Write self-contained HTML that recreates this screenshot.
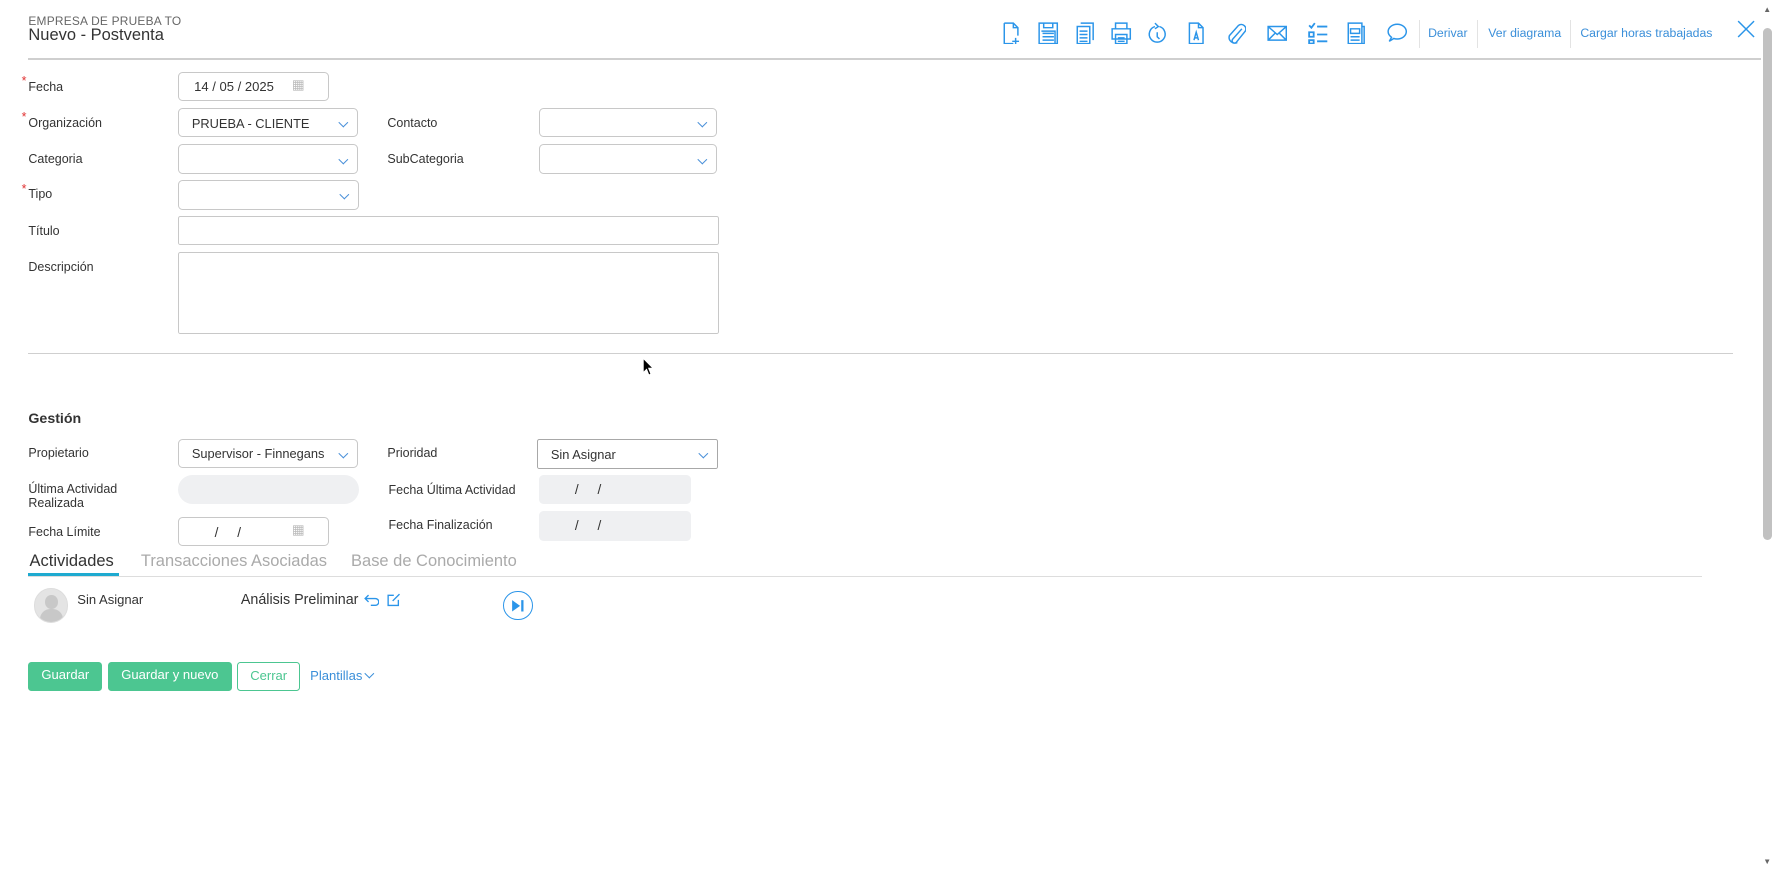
<!DOCTYPE html>
<html><head><meta charset="utf-8"><style>
html,body{margin:0;padding:0;background:#fff;overflow:hidden}
body{width:1565px;height:766px;zoom:1.13610;position:relative;font-family:"Liberation Sans",sans-serif;color:#333}
.a{position:absolute}
.lbl{position:absolute;font-size:11px;color:#333;left:25px}
.req:before{content:"*";color:#e03030;position:absolute;left:-6px;top:-5px;font-size:11px}
.box{position:absolute;border:1px solid #c8c8c8;border-radius:4px;box-sizing:border-box;background:#fff;font-size:13px}
.sel:after{content:"";position:absolute;right:9px;top:9px;width:5px;height:5px;border-right:1.3px solid #4a90d9;border-bottom:1.3px solid #4a90d9;transform:rotate(45deg)}
.gray{position:absolute;background:#eff0f2;border-radius:4px}
.ic{position:absolute;top:19px}
.ic svg{width:18px;height:20px;fill:none;stroke:#2b95e9;stroke-width:1.3}
.lnk{position:absolute;top:23px;font-size:10.8px;color:#3b8fd9}
.sep{position:absolute;top:18px;width:1px;height:24px;background:#e3e3e3}
.btn{position:absolute;top:583px;height:25px;box-sizing:border-box;border-radius:3px;font-size:11.5px;line-height:23px;text-align:center}
</style></head><body>
<div class="a" style="left:25px;top:12px;font-size:10.5px;color:#666;letter-spacing:.2px">EMPRESA DE PRUEBA TO</div>
<div class="a" style="left:25px;top:23px;font-size:14.5px;color:#333">Nuevo - Postventa</div>
<div class="a" style="left:25px;top:51px;width:1525px;height:2px;background:#cfcfcf"></div>

<div class="ic" style="left:882px"><svg viewBox="0 0 18 20"><path d="M2 1h8l4 4v7M2 1v18h8M10 1v4h4M12 14v6M9 17h6"/></svg></div>
<div class="ic" style="left:914px"><svg viewBox="0 0 18 20"><path d="M1 1h16v18H1zM5 1v4h8V1M4 10h10M4 13h10M4 16h10M3 8h12v11"/></svg></div>
<div class="ic" style="left:946px"><svg viewBox="0 0 18 20"><path d="M5 1h11v15M2 4h11v15H2zM4 8h7M4 11h7M4 14h7M4 17h7"/></svg></div>
<div class="ic" style="left:978px"><svg viewBox="0 0 18 20"><path d="M4 6V1h10v5M1 6h16v9H1zM4 11h10v8H4zM6 14h6M6 17h6"/></svg></div>
<div class="ic" style="left:1010px"><svg viewBox="0 0 18 20"><path d="M7 4a7 7 0 1 0 4 0M7 1l3 3-3 2M9 9v4l2 2"/></svg></div>
<div class="ic" style="left:1044px"><svg viewBox="0 0 18 20"><path d="M3 1h8l4 4v14H3zM11 1v4h4M7 16l2-7 2 7M8 14h2"/></svg></div>
<div class="ic" style="left:1079px"><svg viewBox="0 0 18 20"><path d="M14 6l-8 9a2 2 0 0 0 3 3l8-10a4 4 0 0 0-6-5L3 12a5 5 0 0 0 7 6"/></svg></div>
<div class="ic" style="left:1115px"><svg viewBox="0 0 18 20"><path d="M1 4h16v12H1zM1 4l8 7 8-7M1 16l6-6M17 16l-6-6"/></svg></div>
<div class="ic" style="left:1151px"><svg viewBox="0 0 18 20" style="stroke-width:1.6"><path d="M1 3l2 2 3-4M1 9h4v4H1zM1 16h4v3H1zM8 4h9M8 11h9M8 17h9"/></svg></div>
<div class="ic" style="left:1185px"><svg viewBox="0 0 18 20"><path d="M2 1h12v18H2zM14 4h2v15h-2M4 6h8v4H4zM4 13h8M4 16h8"/></svg></div>
<div class="ic" style="left:1221px"><svg viewBox="0 0 18 20"><path d="M9 2c4.5 0 8 3 8 6.5S13.5 15 9 15c-1 0-2 0-3-.5L2 17l2-3.5C2 12 1 10.5 1 8.5 1 5 4.5 2 9 2z"/></svg></div>
<div class="sep" style="left:1249px"></div>
<div class="lnk" style="left:1257px">Derivar</div>
<div class="sep" style="left:1300px"></div>
<div class="lnk" style="left:1310px">Ver diagrama</div>
<div class="sep" style="left:1382px"></div>
<div class="lnk" style="left:1391px">Cargar horas trabajadas</div>
<div class="a" style="left:1529px;top:18px"><svg width="16" height="16" viewBox="0 0 16 16"><path d="M1 1l14 14M15 1L1 15" stroke="#2b95e9" stroke-width="1.3"/></svg></div>

<div class="a" style="left:1550px;top:0;width:15px;height:766px;background:#fff"></div>
<div class="a" style="left:1552px;top:25px;width:8px;height:450px;background:#c1c1c1;border-radius:4px"></div>
<div class="a" style="left:1552px;top:4px;font-size:7px;color:#666">▲</div>
<div class="a" style="left:1552px;top:754px;font-size:7px;color:#666">▼</div>

<div class="lbl req" style="top:70px">Fecha</div>
<div class="box" style="left:157px;top:63px;width:133px;height:26px"><span class="a" style="left:13px;top:6px;font-size:11.5px">14 / 05 / 2025</span><span class="a" style="left:99px;top:4px;color:#bbb;font-size:12px">▦</span></div>
<div class="lbl req" style="top:102px">Organización</div>
<div class="box sel" style="left:157px;top:95px;width:158px;height:26px"><span class="a" style="left:11px;top:6px;font-size:11.3px">PRUEBA - CLIENTE</span></div>
<div class="a" style="left:341px;top:102px;font-size:11px">Contacto</div>
<div class="box sel" style="left:474px;top:95px;width:157px;height:26px"></div>
<div class="lbl" style="top:134px">Categoria</div>
<div class="box sel" style="left:157px;top:127px;width:158px;height:26px"></div>
<div class="a" style="left:341px;top:134px;font-size:11px">SubCategoria</div>
<div class="box sel" style="left:474px;top:127px;width:157px;height:26px"></div>
<div class="lbl req" style="top:165px">Tipo</div>
<div class="box sel" style="left:157px;top:158px;width:159px;height:27px"></div>
<div class="lbl" style="top:197px">Título</div>
<div class="box" style="left:157px;top:190px;width:476px;height:26px;border-radius:2px"></div>
<div class="lbl" style="top:229px">Descripción</div>
<div class="box" style="left:157px;top:222px;width:476px;height:72px;border-radius:2px"></div>
<div class="a" style="left:25px;top:311px;width:1500px;height:1px;background:#cfcfcf"></div>
<div class="a" style="left:565px;top:314px"><svg width="11" height="17" viewBox="0 0 11 17"><path d="M1 1v13l3-3 2 5 2-1-2-5h4z" fill="#000" stroke="#fff" stroke-width="1"/></svg></div>

<div class="a" style="left:25px;top:362px;font-size:12.5px;font-weight:bold">Gestión</div>
<div class="lbl" style="top:393px">Propietario</div>
<div class="box sel" style="left:157px;top:386px;width:158px;height:26px"><span class="a" style="left:11px;top:6px;font-size:11.3px">Supervisor - Finnegans</span></div>
<div class="a" style="left:341px;top:393px;font-size:11px">Prioridad</div>
<div class="box sel" style="left:473px;top:386px;width:159px;height:27px;border-color:#a8a8a8;border-radius:2px"><span class="a" style="left:11px;top:7px;font-size:11.3px">Sin Asignar</span></div>
<div class="lbl" style="top:424px;line-height:13px">Última Actividad<br>Realizada</div>
<div class="gray" style="left:157px;top:418px;width:159px;height:26px;border-radius:13px"></div>
<div class="a" style="left:342px;top:425px;font-size:11px">Fecha Última Actividad</div>
<div class="gray" style="left:474px;top:418px;width:134px;height:26px"><span class="a" style="left:32px;top:6px;font-size:12px">/&nbsp;&nbsp;&nbsp;&nbsp;&nbsp;/</span></div>
<div class="lbl" style="top:462px">Fecha Límite</div>
<div class="box" style="left:157px;top:455px;width:133px;height:26px"><span class="a" style="left:31px;top:6px;font-size:12px">/&nbsp;&nbsp;&nbsp;&nbsp;&nbsp;/</span><span class="a" style="left:99px;top:4px;color:#bbb;font-size:12px">▦</span></div>
<div class="a" style="left:342px;top:456px;font-size:11px">Fecha Finalización</div>
<div class="gray" style="left:474px;top:450px;width:134px;height:26px"><span class="a" style="left:32px;top:6px;font-size:12px">/&nbsp;&nbsp;&nbsp;&nbsp;&nbsp;/</span></div>

<div class="a" style="left:26px;top:486px;font-size:14.5px;color:#333">Actividades</div>
<div class="a" style="left:124px;top:486px;font-size:14.5px;color:#aaa">Transacciones Asociadas</div>
<div class="a" style="left:309px;top:486px;font-size:14.5px;color:#aaa">Base de Conocimiento</div>
<div class="a" style="left:25px;top:507px;width:1473px;height:1px;background:#ddd"></div>
<div class="a" style="left:25px;top:504px;width:80px;height:3px;background:#1eaad0"></div>

<div class="a" style="left:30px;top:518px;width:30px;height:30px;border-radius:50%;background:#e4e4e4;overflow:hidden;border:1px solid #ddd;box-sizing:border-box"><div class="a" style="left:9px;top:5px;width:11px;height:12px;border-radius:50%;background:#c8c8c8"></div><div class="a" style="left:4px;top:17px;width:21px;height:14px;border-radius:9px 9px 0 0;background:#c8c8c8"></div></div>
<div class="a" style="left:68px;top:521px;font-size:11.5px">Sin Asignar</div>
<div class="a" style="left:212px;top:521px;font-size:12.6px">Análisis Preliminar</div>
<div class="a" style="left:320px;top:521px"><svg width="14" height="12" viewBox="0 0 14 12"><path d="M4 1L1 4l3 3M1 4h9a3 3 0 0 1 0 6H6" fill="none" stroke="#2b95e9" stroke-width="1.2"/></svg></div>
<div class="a" style="left:341px;top:520px"><svg width="12" height="12" viewBox="0 0 12 12"><path d="M6 2H1v9h9V6M5 7l6-6" fill="none" stroke="#2b95e9" stroke-width="1.2"/></svg></div>
<div class="a" style="left:443px;top:520px;width:26px;height:26px;border:1.3px solid #2b95e9;border-radius:50%;box-sizing:border-box"><svg class="a" style="left:6px;top:6px" width="12" height="12" viewBox="0 0 12 12"><path d="M1 1l7 5-7 5z" fill="#2b95e9"/><rect x="9" y="1" width="2" height="10" fill="#2b95e9"/></svg></div>

<div class="btn" style="left:25px;width:65px;background:#4cc691;color:#fff">Guardar</div>
<div class="btn" style="left:95px;width:109px;background:#4cc691;color:#fff">Guardar y nuevo</div>
<div class="btn" style="left:209px;width:55px;border:1px solid #4cc691;color:#4cc691;background:#fff">Cerrar</div>
<div class="a" style="left:273px;top:588px;font-size:11.5px;color:#3b8fd9">Plantillas <span style="display:inline-block;width:5px;height:5px;border-right:1px solid #3b8fd9;border-bottom:1px solid #3b8fd9;transform:rotate(45deg);position:relative;top:-3px"></span></div>
</body></html>
